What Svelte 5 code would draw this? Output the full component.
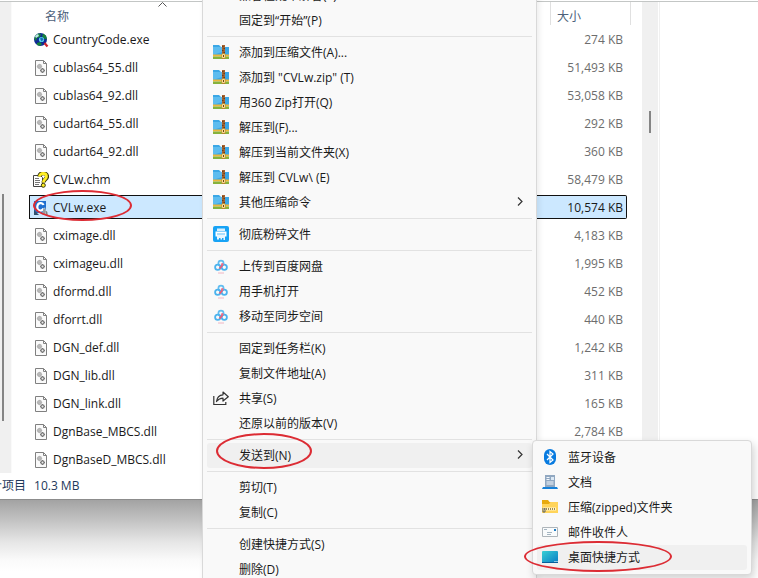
<script>
  const files = [
    { name: 'CountryCode.exe', size: '274 KB', icon: 'globe' },
    { name: 'cublas64_55.dll', size: '51,493 KB', icon: 'dll' },
    { name: 'cublas64_92.dll', size: '53,058 KB', icon: 'dll' },
    { name: 'cudart64_55.dll', size: '292 KB', icon: 'dll' },
    { name: 'cudart64_92.dll', size: '360 KB', icon: 'dll' },
    { name: 'CVLw.chm', size: '58,479 KB', icon: 'help' },
    { name: 'CVLw.exe', size: '10,574 KB', icon: 'cvl', selected: true },
    { name: 'cximage.dll', size: '4,183 KB', icon: 'dll' },
    { name: 'cximageu.dll', size: '1,995 KB', icon: 'dll' },
    { name: 'dformd.dll', size: '452 KB', icon: 'dll' },
    { name: 'dforrt.dll', size: '440 KB', icon: 'dll' },
    { name: 'DGN_def.dll', size: '1,242 KB', icon: 'dll' },
    { name: 'DGN_lib.dll', size: '311 KB', icon: 'dll' },
    { name: 'DGN_link.dll', size: '165 KB', icon: 'dll' },
    { name: 'DgnBase_MBCS.dll', size: '2,784 KB', icon: 'dll' },
    { name: 'DgnBaseD_MBCS.dll', size: '', icon: 'dll' }
  ];

  // 右键菜单分组
  const groups = [
    [{ text: '兼容性疑难解答(Y)' }, { text: '固定到“开始”(P)' }],
    [
      { text: '添加到压缩文件(A)...', icon: 'zip' },
      { text: '添加到 "CVLw.zip" (T)', icon: 'zip' },
      { text: '用360 Zip打开(Q)', icon: 'zip' },
      { text: '解压到(F)...', icon: 'zip' },
      { text: '解压到当前文件夹(X)', icon: 'zip' },
      { text: '解压到 CVLw\\ (E)', icon: 'zip' },
      { text: '其他压缩命令', icon: 'zip', more: true }
    ],
    [{ text: '彻底粉碎文件', icon: 'shred' }],
    [
      { text: '上传到百度网盘', icon: 'cloud' },
      { text: '用手机打开', icon: 'cloud' },
      { text: '移动至同步空间', icon: 'cloud' }
    ],
    [
      { text: '固定到任务栏(K)' },
      { text: '复制文件地址(A)' },
      { text: '共享(S)', icon: 'share' },
      { text: '还原以前的版本(V)' }
    ],
    [{ text: '发送到(N)', more: true, open: true }],
    [{ text: '剪切(T)' }, { text: '复制(C)' }],
    [{ text: '创建快捷方式(S)' }, { text: '删除(D)' }]
  ];

  const sendTo = [
    { text: '蓝牙设备', icon: 'bluetooth' },
    { text: '文档', icon: 'document' },
    { text: '压缩(zipped)文件夹', icon: 'zipped' },
    { text: '邮件收件人', icon: 'mail' },
    { text: '桌面快捷方式', icon: 'desktop', active: true }
  ];
</script>

{#snippet glyph(name)}
  <svg class="icon" viewBox="0 0 16 16" aria-hidden="true">
    {#if name === 'dll'}
      <path d="M2.500.5h8l3 3v12h-11z" fill="#fafafa" stroke="#808080" />
      <path d="M10.500.5v3h3" fill="none" stroke="#808080" />
      <circle cx="6.500" cy="6.500" r="1.800" fill="#e4e4e4" stroke="#a8a8a8" stroke-width="1.300" />
      <path d="M6.500 3.800v5.400M3.800 6.500h5.400" stroke="#b4b4b4" stroke-width=".8" />
      <circle cx="9.500" cy="10.500" r="1.600" fill="#eee" stroke="#777" stroke-width="1.300" />
      <path d="M9.500 8v1M9.500 12v1M7 10.500h1M11 10.500h1" stroke="#777" />
    {:else if name === 'globe'}
      <circle cx="7.500" cy="7.500" r="6.500" fill="#102a96" />
      <path d="M2 4 5 1.500l3 .5-1 3-3 1-1 3-1.500-2zM10 1.500l3 2 1 4-3-1-2-2zM4 11l3-1 2 2-2 2-3-1z" fill="#16813c" />
      <path d="M2 4l3-2 1 2-3 2z" fill="#bde8e6" />
      <circle cx="8.500" cy="7.500" r="2.600" fill="#57d5ec" />
      <path d="M7 6.500l2-1 1.500 2-2 2z" fill="#176cba" />
      <path d="M11.500 11l3 3.500" stroke="#ce252c" stroke-width="2.200" />
    {:else if name === 'help'}
      <path d="M.5 3.500h7l2 2v9h-9z" fill="#fff" stroke="#444" />
      <path d="M2 6.500h4M2 8.500h5M2 10.500h5M2 12.500h4" stroke="#777" />
      <path d="M6.500 4.500C6.500 0 14 .4 14 4.500c0 2.700-3.500 2.800-3.500 6" fill="none" stroke="#35320b" stroke-width="4.200" />
      <path d="M6.500 4.500C6.500.5 13.500.5 13.500 4.500c0 2.700-3.200 2.800-3.200 6" fill="none" stroke="#ffef24" stroke-width="2.800" />
      <circle cx="10.300" cy="13.300" r="2" fill="#ffef24" stroke="#35320b" />
    {:else if name === 'cvl'}
      <path d="M1 1h12v12H1z" fill="#1f6fd0" />
      <path d="M10.500 5c-1-3-6-2.500-6.200 1.800C4 11 9 12 10.500 8.500" fill="none" stroke="#fff" stroke-width="2.200" />
      <path d="M1 10l5 5H1z" fill="#32516f" />
      <path d="M9 15l1-5 2-3 1 4 2 1v3z" fill="#b9bfc0" />
      <path d="M11 9v6M13 11l1 4" stroke="#707a80" />
    {:else if name === 'zip'}
      <path d="M0 1h6l2 2h8v9H0z" fill="#3ba7e6" />
      <path d="M0 3h9v5L0 11z" fill="#6cc4f2" opacity=".7" />
      <path d="M0 10.500h16v2H0z" fill="#efb73c" />
      <path d="M0 12.500h16V15H0z" fill="#86b23c" />
      <path d="M9 1h3v14H9z" fill="#a4632f" />
      <path d="M9 2.500h1.500M10.500 4.500H12M9 6.500h1.500M10.500 8.500H12" stroke="#6a3c1e" />
      <rect x="8.700" y="9.700" width="3.600" height="4.600" rx="1" fill="#ffeeb0" stroke="#c08a22" stroke-width=".8" />
      <path d="M10.500 11v2" stroke="#74430d" />
    {:else if name === 'shred'}
      <rect width="16" height="16" rx="2" fill="#18a3f5" />
      <path d="M4 2.500h8V5H4z" fill="#d8f0ff" />
      <path d="M2.500 5.500h11v5h-11z" fill="#fff" />
      <path d="M4 8h8" stroke="#5bbdf7" />
      <path d="M4 9h8v5h-1.500v-2H9v1.500H7.500V12H6v1.500H4z" fill="#e9f7ff" />
    {:else if name === 'cloud'}
      <circle cx="8" cy="5.300" r="2.600" fill="none" stroke="#62bdf0" stroke-width="1.700" />
      <circle cx="4.700" cy="9.300" r="2.600" fill="none" stroke="#4cb3ee" stroke-width="1.800" />
      <circle cx="11.300" cy="9.300" r="2.600" fill="none" stroke="#4cb3ee" stroke-width="1.800" />
      <path d="M6.500 10.500 8 9l1.500-2" fill="none" stroke="#ec5c79" stroke-width="1.800" />
      <circle cx="9.300" cy="6.300" r="1.200" fill="#ec6f88" />
      <path d="M5 15h6" stroke="#efb6c4" />
    {:else if name === 'share'}
      <path d="M.8 6v8.500h12V12" fill="none" stroke="#333" stroke-width="1.200" />
      <path d="M3.500 11.500C4 7.500 6.500 5 10 4.800V2l5.300 4.700L10 11V8.200c-2.500 0-4.500.8-6.500 3.300z" fill="none" stroke="#333" stroke-width="1.200" stroke-linejoin="round" />
    {:else if name === 'bluetooth'}
      <rect x="2" width="12" height="16" rx="6" fill="#087be0" />
      <path d="M5 5l6 6-3 2.500v-11L11 5l-6 6" fill="none" stroke="#fff" stroke-width="1.200" />
    {:else if name === 'document'}
      <path d="M3 1h10v12H3z" fill="#91a8c1" />
      <path d="M4.500 3.500h3M4.500 5.500h3M4.500 8h7M4.500 10h7" stroke="#f4f8fd" />
      <path d="M9 3h3v3H9z" fill="#dce9f5" />
      <path d="M1 13h14l1 2H0z" fill="#1680d8" />
    {:else if name === 'zipped'}
      <path d="M0 1h6l1.500 2H16v11H0z" fill="#e7aa0f" />
      <path d="M0 5h7l1.500-2H16v11H0z" fill="#ffd45a" />
      <path d="M1 10h13" stroke="#fff4c9" stroke-width="3" />
      <path d="M2 10h12" stroke="#806529" stroke-width="1.600" stroke-dasharray="1 1" />
      <path d="M1 9v4h2V9" fill="none" stroke="#5f6467" />
    {:else if name === 'mail'}
      <path d="M.5 3.500h15v9H.5z" fill="#f9fbfc" stroke="#aeb5ba" />
      <path d="M2 5.500h3M5 8.500h5M5 10.500h4" stroke="#a5b5c1" />
      <path d="M12 5h2v2h-2z" fill="#1d7bc2" />
    {:else if name === 'desktop'}
      <defs>
        <linearGradient id="desk" x1="0" y1="0" x2="1" y2="1">
          <stop offset="0" stop-color="#38d0d4" />
          <stop offset="1" stop-color="#087bc5" />
        </linearGradient>
      </defs>
      <rect y="2" width="16" height="12" rx="1" fill="url(#desk)" />
      <path d="M0 13.500h16" stroke="#075d9b" />
      <path d="M12.500 12.500h1M14.500 12.500h1" stroke="#fff" />
    {/if}
  </svg>
{/snippet}

<main class="desktop">
  <section class="explorer">
    <div class="panes">
      <div class="nav-pane"><div class="nav-thumb"></div></div>
      <div class="list-pane">
        <table>
          <thead>
            <tr>
              <th class="name">
                名称
                <svg class="sort" viewBox="0 0 9 5" aria-hidden="true">
                  <path d="M.5 4.500l4-4 4 4" fill="none" stroke="#555" />
                </svg>
              </th>
              <th class="size">大小</th>
            </tr>
          </thead>
          <tbody>
            {#each files as file}
              <tr class:selected={file.selected}>
                <td>
                  <div class="cell">
                    {@render glyph(file.icon)}
                    <span>{file.name}</span>
                    {#if file.selected}<i class="ring ring-file"></i>{/if}
                  </div>
                </td>
                <td class="size"><div class="cell">{file.size}</div></td>
              </tr>
            {/each}
          </tbody>
        </table>
      </div>
      <div class="scrollbar"><div class="thumb"></div></div>
      <div class="preview"></div>
    </div>
    <footer class="status">
      <span class="count">个项目</span>
      <span>10.3 MB</span>
    </footer>
  </section>
  <div class="shade"></div>

  <div class="menu context">
    {#each groups as group}
      <ul>
        {#each group as item}
          <li>
            <button class:active={item.open}>
              {@render glyph(item.icon)}
              <span class="label">{item.text}</span>
              {#if item.more}
                <svg class="chevron" viewBox="0 0 6 9" aria-hidden="true">
                  <path d="M1 .5l4 4-4 4" fill="none" stroke="#333" stroke-width="1.200" />
                </svg>
              {/if}
            </button>
            {#if item.open}
              <ul class="menu submenu">
                {#each sendTo as target}
                  <li>
                    <button class:active={target.active}>
                      {@render glyph(target.icon)}
                      <span class="label">{target.text}</span>
                    </button>
                    {#if target.active}<i class="ring ring-target"></i>{/if}
                  </li>
                {/each}
              </ul>
              <i class="ring ring-send"></i>
            {/if}
          </li>
        {/each}
      </ul>
    {/each}
  </div>
</main>

<style>
  :global(body) {
    margin: 0;
    background: #fff;
  }

  .desktop {
    position: relative;
    min-height: 100vh;
    display: flex;
    flex-direction: column;
    overflow: hidden;
    font-family: 'Open Sans', 'Noto Sans CJK SC', sans-serif;
    font-size: 12px;
    color: #1a1a1a;
  }

  .explorer {
    background: #fff;
    border-bottom: 1px solid #8c8c8c;
  }

  .panes {
    display: flex;
    margin-top: 1px;
    border-top: 1px solid #c3c6c5;
  }

  .nav-pane {
    width: 12px;
    background: #f0f0f0;
    border-right: 1px solid #fafafa;
    box-sizing: border-box;
    flex-shrink: 0;
  }

  .nav-thumb {
    width: 2px;
    height: 227px;
    margin: 192px 0 0 2px;
    background: #858585;
  }

  .list-pane {
    flex: 1;
    padding: 0 11px 0 17px;
  }

  table {
    width: 100%;
    table-layout: fixed;
    border-collapse: separate;
    border-spacing: 0;
  }

  th {
    height: 23px;
    padding: 4px 0 0;
    font-weight: 400;
    text-align: left;
    color: #4c607a;
    box-sizing: border-box;
  }

  th.name {
    position: relative;
    padding-left: 16px;
  }

  th.size {
    width: 81px;
    padding-left: 6px;
    border-left: 1px solid #e0e0e0;
    border-right: 1px solid #e0e0e0;
  }

  .sort {
    position: absolute;
    left: 129px;
    top: 0;
    width: 9px;
    height: 5px;
  }

  td {
    padding: 2px 0;
  }

  td.size {
    color: #6d6d6d;
    padding-right: 4px;
  }

  .cell {
    position: relative;
    display: flex;
    align-items: center;
    gap: 4px;
    height: 24px;
    padding: 1px 0 0 4px;
    box-sizing: border-box;
    border: 1px solid transparent;
    border-width: 1px 0;
  }

  td.size .cell {
    justify-content: flex-end;
    padding-right: 4px;
  }

  .selected .cell {
    background: #cce8ff;
    border-color: #111;
    border-left: 1px solid #111;
    padding-left: 3px;
    color: #1a1a1a;
  }

  .selected .size .cell {
    border-left: 0;
    border-right: 1px solid #111;
    border-radius: 0 2px 2px 0;
    padding-right: 3px;
  }

  .icon {
    width: 16px;
    height: 16px;
    flex-shrink: 0;
  }

  .scrollbar {
    width: 16px;
    background: #f0f0f0;
    flex-shrink: 0;
  }

  .thumb {
    width: 2px;
    height: 22px;
    margin: 109px auto 0;
    background: #858585;
  }

  .preview {
    width: 98px;
    margin-left: 1px;
    border-left: 1px solid #f0f0f0;
  }

  .status {
    display: flex;
    align-items: center;
    gap: 8px;
    height: 24px;
    padding-bottom: 2px;
    color: #1e395b;
  }

  .count {
    margin-left: -10px;
  }

  .shade {
    flex: 1;
    min-height: 78px;
    background: linear-gradient(#a3a3a3, #c2c2c2 20px, #e6e6e6 42px, #fafafa 60px, #fff 72px);
  }

  .menu {
    background: #f9f9f9;
    border: 1px solid #d9d9d9;
    box-sizing: border-box;
  }

  .context {
    position: absolute;
    left: 202px;
    top: -18px;
    bottom: -10px;
    width: 335px;
    padding: 0 4px;
    box-shadow: 2px 2px 6px rgba(0, 0, 0, 0.08);
  }

  ul {
    list-style: none;
    margin: 0;
    padding: 0;
  }

  .context > ul + ul {
    margin-top: 3px;
    padding-top: 3px;
    border-top: 1px solid #e2e2e2;
  }

  li {
    position: relative;
  }

  button {
    display: flex;
    align-items: center;
    gap: 10px;
    width: 100%;
    height: 25px;
    padding: 0 9px 2px 6px;
    border: 0;
    border-radius: 3px;
    background: none;
    color: inherit;
    font: inherit;
    text-align: left;
    white-space: nowrap;
  }

  button.active {
    background: #f0f0f0;
  }

  .label {
    flex: 1;
  }

  .chevron {
    width: 6px;
    height: 9px;
  }

  .submenu {
    position: absolute;
    z-index: 1;
    left: 100%;
    top: -3px;
    width: 220px;
    padding: 4px;
    border-radius: 4px;
    box-shadow: 2px 4px 8px rgba(0, 0, 0, 0.18);
  }

  .submenu button {
    padding-left: 5px;
  }

  .ring {
    position: absolute;
    border: 2px solid #dc2c34;
    border-radius: 50%;
    box-sizing: border-box;
    pointer-events: none;
  }

  .ring-file {
    left: 3px;
    top: -6px;
    width: 99px;
    height: 31px;
  }

  .ring-send {
    left: 9px;
    top: -10px;
    width: 96px;
    height: 36px;
  }

  .ring-target {
    left: -13px;
    top: -4px;
    width: 148px;
    height: 31px;
  }
</style>
